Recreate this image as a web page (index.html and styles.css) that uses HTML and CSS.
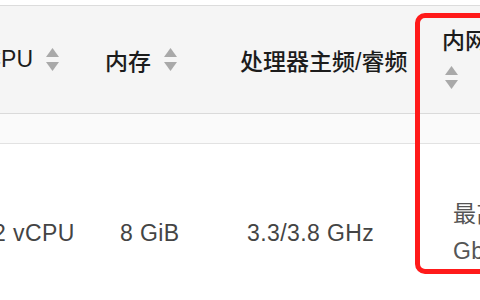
FILE: index.html
```html
<!DOCTYPE html>
<html lang="zh-CN">
<head>
    <meta charset="UTF-8">
    <title>实例规格</title>
    <link rel="stylesheet" href="styles.css">
</head>
<body>
    <div class="page">
        <div class="spec-table">
            <div class="row head-row">
                <div class="head-cell head-cell-cpu">vCPU
                    <svg class="sort-icon" viewBox="0 0 13 23"><path d="M6.5 0 L13 9 L0 9 Z"/><path d="M0 14 L13 14 L6.5 23 Z"/></svg>
                </div>
                <div class="head-cell">内存
                    <svg class="sort-icon" viewBox="0 0 13 23"><path d="M6.5 0 L13 9 L0 9 Z"/><path d="M0 14 L13 14 L6.5 23 Z"/></svg>
                </div>
                <div class="head-cell">处理器主频/睿频</div>
                <div class="head-cell head-cell-wrap">
                    <span>内网带宽</span>
                    <svg class="sort-icon" viewBox="0 0 13 23"><path d="M6.5 0 L13 9 L0 9 Z"/><path d="M0 14 L13 14 L6.5 23 Z"/></svg>
                </div>
            </div>
            <div class="row filter-row"></div>
            <div class="row body-row">
                <div class="body-cell cell-cpu">2 vCPU</div>
                <div class="body-cell cell-mem">8 GiB</div>
                <div class="body-cell cell-freq">3.3/3.8 GHz</div>
                <div class="body-cell cell-net">最高 10 Gbit/s</div>
            </div>
        </div>
        <!-- 高亮框 -->
        <div class="highlight"></div>
    </div>
</body>
</html>
```

FILE: styles.css
```css
body {
    margin: 0;
    background-color: #fff;
    font-family: 'Liberation Sans', 'Noto Sans CJK SC', sans-serif;
}

.page {
    position: relative;
    width: 480px;
    height: 300px;
    overflow: hidden;
}

.spec-table {
    margin-top: 5px;
    margin-left: -41px;
    border-top: 1px solid #dcdcdc;
}

.row {
    display: grid;
    grid-template-columns: 134px 135px 202px 200px;
}

.head-row {
    height: 107px;
    background-color: #f5f5f5;
    border-bottom: 1px solid #dadada;
}

.head-cell {
    display: flex;
    align-items: center;
    gap: 13px;
    padding-left: 12px;
    font-size: 23px;
    font-weight: 500;
    color: #1c1c1c;
    white-space: nowrap;
}

.head-cell-cpu {
    padding-left: 14px;
}

.head-cell-wrap {
    flex-direction: column;
    align-items: flex-start;
    justify-content: center;
    gap: 10px;
    padding-bottom: 5px;
    line-height: 30px;
}

.head-cell-wrap .sort-icon {
    margin-left: 3px;
}

.sort-icon {
    width: 13px;
    height: 23px;
    fill: #a9a9a9;
    flex-shrink: 0;
}

.filter-row {
    height: 29px;
    background-color: #fafafa;
    border-bottom: 1px solid #e2e2e2;
}

.body-row {
    height: 178px;
}

.body-cell {
    display: flex;
    align-items: center;
    font-size: 23px;
    letter-spacing: 0.4px;
    color: #444;
    white-space: nowrap;
}

.cell-cpu {
    padding-left: 34px;
}

.cell-mem {
    padding-left: 27px;
}

.cell-freq {
    padding-left: 19px;
}

.cell-net {
    padding-left: 23px;
    white-space: normal;
    line-height: 37px;
    width: 80px;
    color: #555;
}

.highlight {
    position: absolute;
    left: 415px;
    top: 13px;
    width: 120px;
    height: 251px;
    border: 5px solid #ff1a1a;
    border-radius: 10px;
}
```
